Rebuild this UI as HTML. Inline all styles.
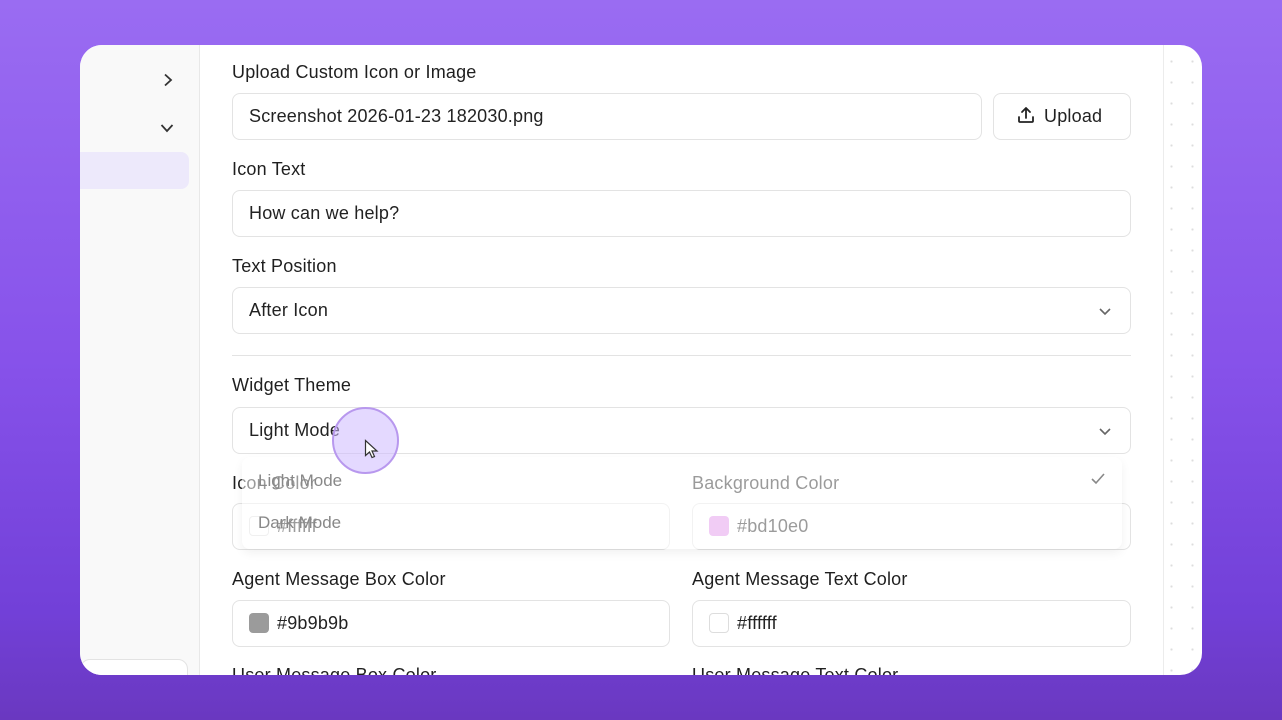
<!DOCTYPE html>
<html><head><style>
*{box-sizing:border-box;margin:0;padding:0}
body{width:1282px;height:720px;overflow:hidden;font-family:"Liberation Sans",sans-serif;background:linear-gradient(180deg,#9a6cf2 0%,#8752ea 50%,#7240d8 85%,#6a38c0 100%);position:relative}
.card{position:absolute;left:80px;top:45px;width:1122px;height:630px;border-radius:22px;background:#fff;overflow:hidden}
.side{position:absolute;left:0;top:0;width:120px;height:100%;background:#f9f9f9;border-right:1px solid #e8e8e8}
.sel{position:absolute;left:0;top:107px;width:109px;height:37px;background:#ede9fb;border-radius:0 8px 8px 0}
.strip{position:absolute;right:0;top:0;width:39px;height:100%;border-left:1px solid #ececec;background-image:radial-gradient(#ddd 1px,transparent 1.2px);background-size:21px 21px;background-position:-3px 6px}
.lbl{position:absolute;font-size:18px;color:#1f1f1f;letter-spacing:0.2px}
.inp{position:absolute;height:47px;border:1px solid #e3e3e3;border-radius:8px;background:#fff;font-size:18px;color:#222;padding-left:16px;line-height:45px;letter-spacing:0.2px}
.sw{display:inline-block;width:20px;height:20px;border-radius:4px;vertical-align:-4px;margin-right:8px}
.chev{position:absolute;right:18px;top:16px}
</style></head><body>
<div class="card">
<div class="side"><div class="sel"></div>
<svg style="position:absolute;left:81px;top:28px" width="14" height="14" viewBox="0 0 14 14"><path d="M4 1.5l6 5.5-6 5.5" fill="none" stroke="#333" stroke-width="1.8"/></svg>
<svg style="position:absolute;left:80px;top:76px" width="14" height="14" viewBox="0 0 14 14"><path d="M1.5 4l5.5 6 5.5-6" fill="none" stroke="#333" stroke-width="1.8"/></svg>
<div style="position:absolute;left:0;top:614px;width:108px;height:30px;border:1px solid #e3e3e3;border-radius:10px;background:#fff"></div>
</div>
<div class="strip"></div>
<div class="lbl" style="left:152px;top:620px">User Message Box Color</div>
<div class="lbl" style="left:612px;top:620px">User Message Text Color</div>
</div>
<div class="lbl" style="left:232px;top:62px">Upload Custom Icon or Image</div>
<div class="inp" style="left:232px;top:93px;width:750px">Screenshot 2026-01-23 182030.png</div>
<div class="inp" style="left:993px;top:93px;width:138px;padding-left:22px"><svg style="vertical-align:-3px;margin-right:8px" width="20" height="20" viewBox="0 0 20 20"><path d="M10 13V3M6 7l4-4 4 4M3 12v4a1 1 0 0 0 1 1h12a1 1 0 0 0 1-1v-4" fill="none" stroke="#222" stroke-width="1.8" stroke-linecap="round" stroke-linejoin="round"/></svg>Upload</div>
<div class="lbl" style="left:232px;top:159px">Icon Text</div>
<div class="inp" style="left:232px;top:190px;width:899px">How can we help?</div>
<div class="lbl" style="left:232px;top:256px">Text Position</div>
<div class="inp" style="left:232px;top:287px;width:899px">After Icon<svg class="chev" width="14" height="14" viewBox="0 0 14 14"><path d="M2 5l5 5 5-5" fill="none" stroke="#666" stroke-width="1.6"/></svg></div>
<div style="position:absolute;left:232px;top:355px;width:899px;height:1px;background:#e3e3e3"></div>
<div class="lbl" style="left:232px;top:375px">Widget Theme</div>
<div class="inp" style="left:232px;top:407px;width:899px">Light Mode<svg class="chev" width="14" height="14" viewBox="0 0 14 14"><path d="M2 5l5 5 5-5" fill="none" stroke="#666" stroke-width="1.6"/></svg></div>
<div class="lbl" style="left:232px;top:473px">Icon Color</div>
<div class="inp" style="left:232px;top:503px;width:438px"><span class="sw" style="border:1px solid #ddd"></span>#ffffff</div>
<div class="lbl" style="left:692px;top:473px">Background Color</div>
<div class="inp" style="left:692px;top:503px;width:439px"><span class="sw" style="background:#e08fe8"></span>#bd10e0</div>
<div style="position:absolute;left:242px;top:457px;width:880px;height:92px;background:rgba(255,255,255,.55);border-radius:8px;box-shadow:0 4px 10px rgba(0,0,0,.06)">
<div style="position:absolute;left:16px;top:14px;font-size:17px;color:#888">Light Mode</div>
<div style="position:absolute;left:16px;top:56px;font-size:17px;color:#888">Dark Mode</div>
<svg style="position:absolute;left:848px;top:15px" width="16" height="14" viewBox="0 0 16 14"><path d="M2 7l4 4 8-9" fill="none" stroke="#888" stroke-width="1.6"/></svg>
</div>
<div class="lbl" style="left:232px;top:569px">Agent Message Box Color</div>
<div class="inp" style="left:232px;top:600px;width:438px"><span class="sw" style="background:#9b9b9b"></span>#9b9b9b</div>
<div class="lbl" style="left:692px;top:569px">Agent Message Text Color</div>
<div class="inp" style="left:692px;top:600px;width:439px"><span class="sw" style="border:1px solid #ddd"></span>#ffffff</div>
<div style="position:absolute;left:332px;top:407px;width:67px;height:67px;border-radius:50%;background:rgba(205,185,255,.55);border:2px solid #b898ee"></div>
<svg style="position:absolute;left:364px;top:439px" width="16" height="22" viewBox="0 0 16 22"><path d="M1.5 1.5v15l4-3.5 2.5 5.5 2.5-1-2.5-5.5h5z" fill="#fff" stroke="#333" stroke-width="1.2"/></svg>
</body></html>
